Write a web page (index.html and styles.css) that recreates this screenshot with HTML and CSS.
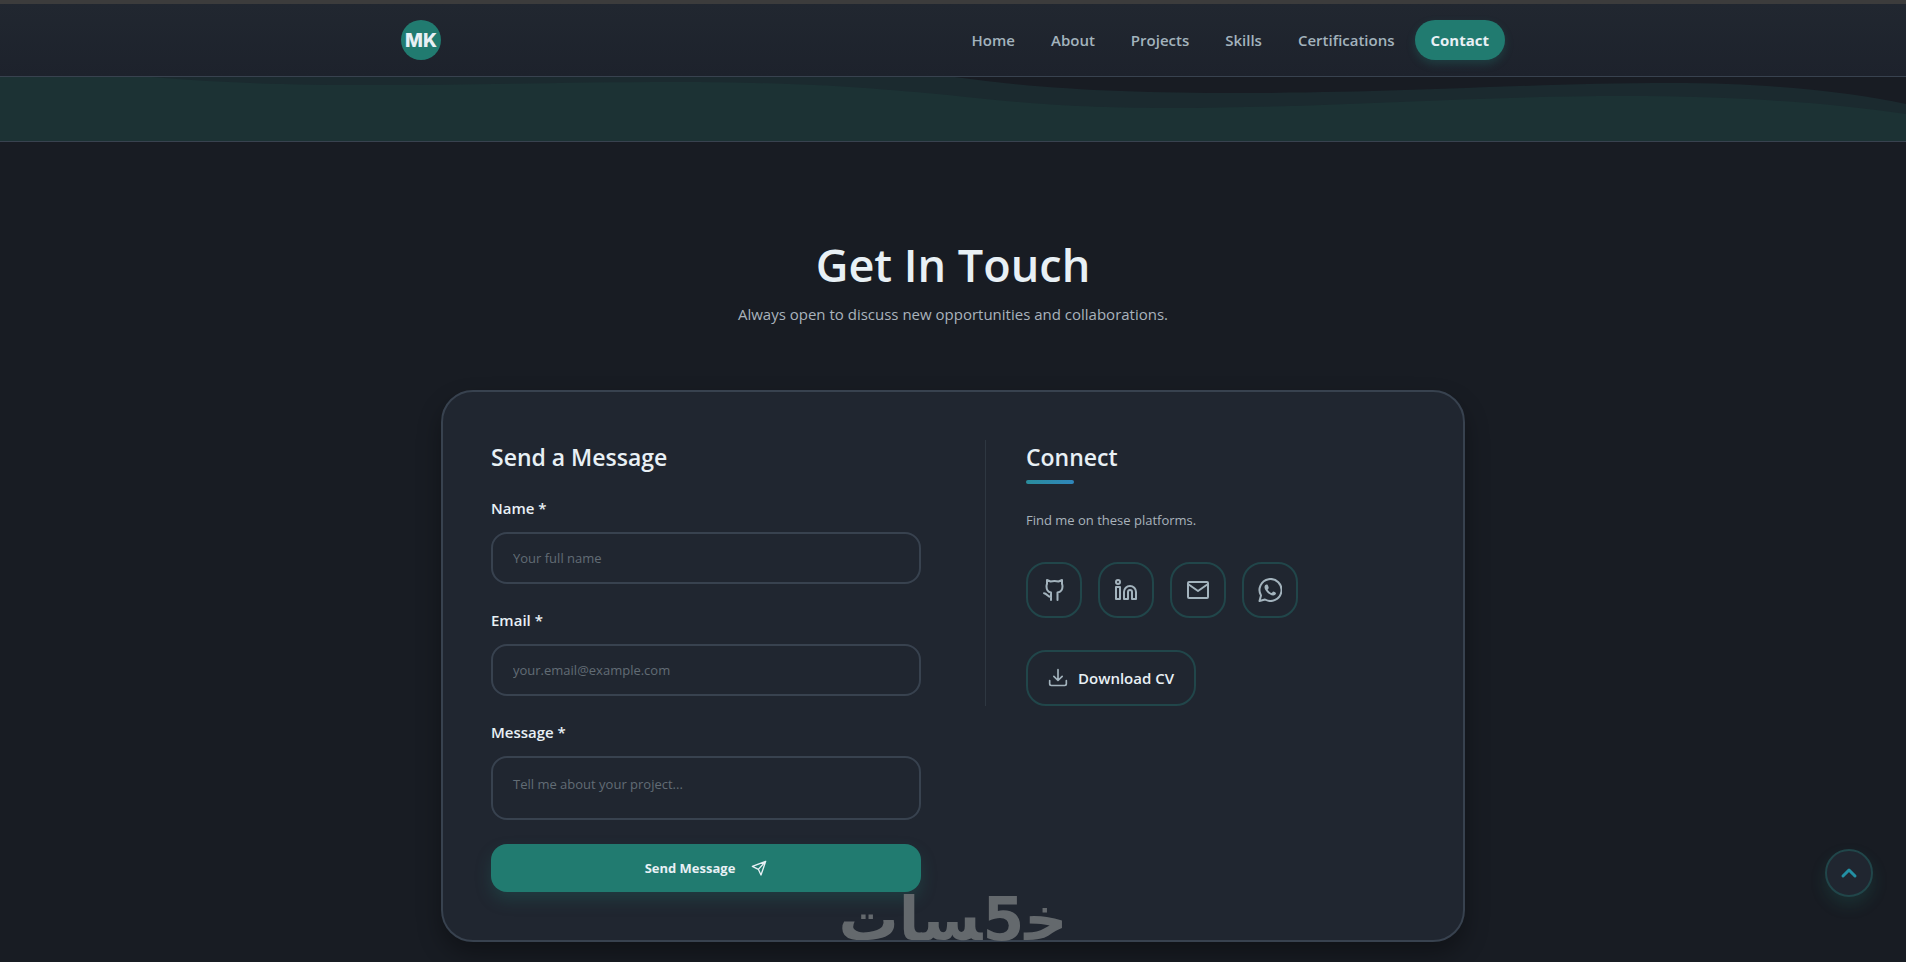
FILE: index.html
```html
<!DOCTYPE html>
<html lang="en">
<head>
<meta charset="utf-8">
<title>MK – Contact</title>
<meta name="viewport" content="width=device-width, initial-scale=1">
<link rel="stylesheet" href="styles.css">
</head>
<body>
<header class="site-header">
  <div class="header-inner">
    <a class="logo" href="#home">MK</a>
    <nav class="nav" aria-label="Main">
      <a class="nav-link" href="#home">Home</a>
      <a class="nav-link" href="#about">About</a>
      <a class="nav-link" href="#projects">Projects</a>
      <a class="nav-link" href="#skills">Skills</a>
      <a class="nav-link" href="#certifications">Certifications</a>
      <a class="nav-link active" href="#contact">Contact</a>
    </nav>
  </div>
</header>

<div class="waves" aria-hidden="true">
  <svg class="waves-art" viewBox="0 0 1906 64" preserveAspectRatio="none">
    <path class="wave-back" d="M0 0H955C1040 12 1130 16 1240 16C1410 16 1530 6 1671 6C1770 6 1850 15 1906 27V64H0Z"/>
    <path class="wave-front" d="M0 0H152C220 6 290 8 377 8C480 8 570 5 675 5C800 5 870 11 948 18C1020 26 1080 31 1167 31C1330 31 1470 19 1623 19C1740 19 1830 26 1906 37V64H0Z"/>
  </svg>
</div>

<main class="contact" id="contact">
  <div class="intro">
    <h1 class="title">Get In Touch</h1>
    <p class="subtitle">Always open to discuss new opportunities and collaborations.</p>
  </div>

  <section class="card">
    <form class="form">
      <h2 class="card-title">Send a Message</h2>
      <div class="field">
        <label class="label" for="name">Name *</label>
        <input class="control" id="name" type="text" placeholder="Your full name">
      </div>
      <div class="field">
        <label class="label" for="email">Email *</label>
        <input class="control" id="email" type="email" placeholder="your.email@example.com">
      </div>
      <div class="field">
        <label class="label" for="message">Message *</label>
        <textarea class="control message" id="message" placeholder="Tell me about your project..."></textarea>
      </div>
      <button class="send" type="submit">Send Message
        <svg class="send-icon" viewBox="0 0 24 24"><path d="M22 2 2 9.500l9 4.500 4 8.500zM11 14 22 2"/></svg>
      </button>
    </form>

    <div class="connect">
      <h2 class="card-title underlined">Connect</h2>
      <p class="connect-text">Find me on these platforms.</p>
      <div class="socials">
        <a class="social" href="#github" aria-label="GitHub"><svg class="icon" viewBox="0 0 24 24"><path d="M9 22v-7.500C6.500 14 4.500 12.500 4.500 8.500 4.500 7.500 4.700 6.500 5 6V2l3.500 1.500Q12.500 2.700 16.500 3.500L20 2V6C20.300 6.500 20.500 7.500 20.500 8.500 20.500 12.500 18.500 14 15.500 14.500V22M9 19C5.500 19 5 15.500 2 15.200"/></svg></a>
        <a class="social" href="#linkedin" aria-label="LinkedIn"><svg class="icon" viewBox="0 0 24 24"><circle cx="4" cy="4" r="2"/><path d="M2 9h4v12H2zM16 8a6 6 0 0 1 6 6v7h-4v-7a2 2 0 0 0-4 0v7h-4v-7a6 6 0 0 1 6-6z"/></svg></a>
        <a class="social" href="#email" aria-label="Email"><svg class="icon" viewBox="0 0 24 24"><rect x="2" y="4" width="20" height="16" rx="1"/><path d="m2 6 10 7 10-7"/></svg></a>
        <a class="social" href="#whatsapp" aria-label="WhatsApp"><svg class="icon" viewBox="0 0 24 24"><path d="M1.500 23 3 17.500A11 11 0 1 1 7 21.500z"/><path class="solid" d="M8.500 6.500c-.6 0-2 .8-2 2.600 0 3.500 4.900 8.400 8.600 8.400 1.700 0 2.900-1.200 2.900-2.400 0-.5-2.300-1.600-2.800-1.600s-1 1.500-1.500 1.500c-.8 0-4-2.500-4-3.600 0-.5 1-1 1-1.500s-.9-3-1.400-3.300z"/></svg></a>
      </div>
      <a class="download" href="#cv" download>
        <svg class="download-icon" viewBox="0 0 24 24"><path d="M12 2v13M7 10l5 5 5-5M2 15v4a2 2 0 0 0 2 2h16a2 2 0 0 0 2-2v-4"/></svg>
        Download CV
      </a>
    </div>
  </section>
</main>

<button class="to-top" type="button" aria-label="Back to top">
  <svg class="to-top-icon" viewBox="0 0 24 24"><path d="m6 15 6-6 6 6"/></svg>
</button>
<div class="watermark" lang="ar" dir="rtl">خ&zwj;5&zwj;سات</div>
</body>
</html>
```
FILE: styles.css
```css
* { box-sizing: border-box; }

body {
  margin: 0;
  min-height: 100vh;
  overflow: hidden;
  background: #181c23;
  color: #e8f0f5;
  font-family: "Open Sans", "Noto Sans", sans-serif;
  font-size: 16px;
}

a { color: inherit; text-decoration: none; }
h1, h2, p { margin: 0; }
svg { fill: none; stroke: currentColor; stroke-width: 2; stroke-linecap: round; stroke-linejoin: round; }

.site-header {
  border-top: 4px solid #3c3c3c;
  border-bottom: 1px solid #38424f;
  background: linear-gradient(#212730, #1d222c);
}

.header-inner {
  display: flex;
  align-items: center;
  justify-content: space-between;
  max-width: 1104px;
  height: 72px;
  margin: 0 auto;
}

.logo {
  display: flex;
  align-items: center;
  justify-content: center;
  width: 40px;
  height: 40px;
  border-radius: 50%;
  background: #217b70;
  font-family: Inter, sans-serif;
  font-size: 19px;
  font-weight: 800;
}

.nav { display: flex; gap: 4px; }

.nav-link {
  padding: 0 16px;
  border-radius: 20px;
  color: #a3b3bd;
  font-size: 15px;
  font-weight: 600;
  line-height: 40px;
}

.nav-link.active {
  background: #217b70;
  color: #e8f0f5;
  font-weight: 700;
  box-shadow: 0 4px 8px #217b704d;
}

.waves { border-bottom: 1px solid #38424f; }
.waves-art { display: block; width: 100%; height: 64px; stroke: none; }
.wave-back { fill: #1b2a2f; }
.wave-front { fill: #1c3234; }

.contact { padding: 88px 32px 20px; }
.intro { text-align: center; }
.title { font-size: 45px; font-weight: 600; line-height: 70px; }
.subtitle { color: #a9b3bc; font-size: 15px; line-height: 28px; }

.card {
  display: grid;
  grid-template-columns: 1fr 1fr;
  gap: 64px;
  max-width: 1024px;
  margin: 62px auto 0;
  padding: 48px;
  border: 2px solid #38424f;
  border-radius: 32px;
  background: #202630;
  box-shadow: 0 12px 24px #0005;
}

.form { display: flex; flex-direction: column; }
.card-title { font-size: 23px; font-weight: 600; line-height: 34px; }
.form .card-title { margin-bottom: 22px; }
.field { display: grid; gap: 12px; margin-bottom: 24px; }
.label { font-size: 15px; font-weight: 600; line-height: 24px; }

.control {
  width: 100%;
  height: 52px;
  padding: 0 20px;
  border: 2px solid #38424f;
  border-radius: 16px;
  background: transparent;
  color: inherit;
  font: inherit;
  font-size: 13px;
}
.control::placeholder { color: #626c75; opacity: 1; }
.message { display: block; height: 64px; padding: 16px 20px; resize: none; line-height: 20px; }

.send {
  display: flex;
  align-items: center;
  justify-content: center;
  gap: 16px;
  height: 48px;
  border: 0;
  border-radius: 16px;
  background: #217b70;
  color: inherit;
  font: inherit;
  font-size: 13px;
  font-weight: 700;
  box-shadow: 0 8px 16px #217b7040;
}
.send-icon { width: 16px; height: 16px; }

.connect {
  align-self: start;
  padding-left: 40px;
  border-left: 1px solid #2e3741;
}
.underlined::after {
  content: "";
  display: block;
  width: 48px;
  height: 4px;
  margin-top: 6px;
  border-radius: 2px;
  background: linear-gradient(90deg, #2a8d9c, #2f86bb);
}
.connect-text { margin-top: 24px; color: #a9b3bc; font-size: 13px; line-height: 24px; }

.socials { display: flex; gap: 16px; margin-top: 30px; }
.social {
  display: grid;
  place-items: center;
  width: 56px;
  height: 56px;
  border: 2px solid #21464a;
  border-radius: 20px;
  color: #a3b3bd;
}
.icon { width: 24px; height: 24px; }
.solid { fill: currentColor; stroke: none; }

.download {
  display: inline-flex;
  align-items: center;
  gap: 10px;
  height: 56px;
  margin-top: 32px;
  padding: 0 20px;
  border: 2px solid #21464a;
  border-radius: 20px;
  font-size: 15px;
  font-weight: 600;
}
.download-icon { width: 20px; height: 20px; color: #a3b3bd; }

.to-top {
  position: fixed;
  right: 33px;
  bottom: 65px;
  display: grid;
  place-items: center;
  width: 48px;
  height: 48px;
  padding: 0;
  border: 2px solid #21464a;
  border-radius: 50%;
  background: #202630;
  color: #2390a4;
  box-shadow: 0 8px 16px #217b7033;
}
.to-top-icon { width: 24px; height: 24px; stroke-width: 3; }

.watermark {
  position: fixed;
  bottom: 20px;
  left: 0;
  right: 0;
  color: #64696d;
  font-family: "DejaVu Sans", sans-serif;
  font-size: 60px;
  font-weight: 700;
  line-height: 46px;
  text-align: center;
  pointer-events: none;
}
```
